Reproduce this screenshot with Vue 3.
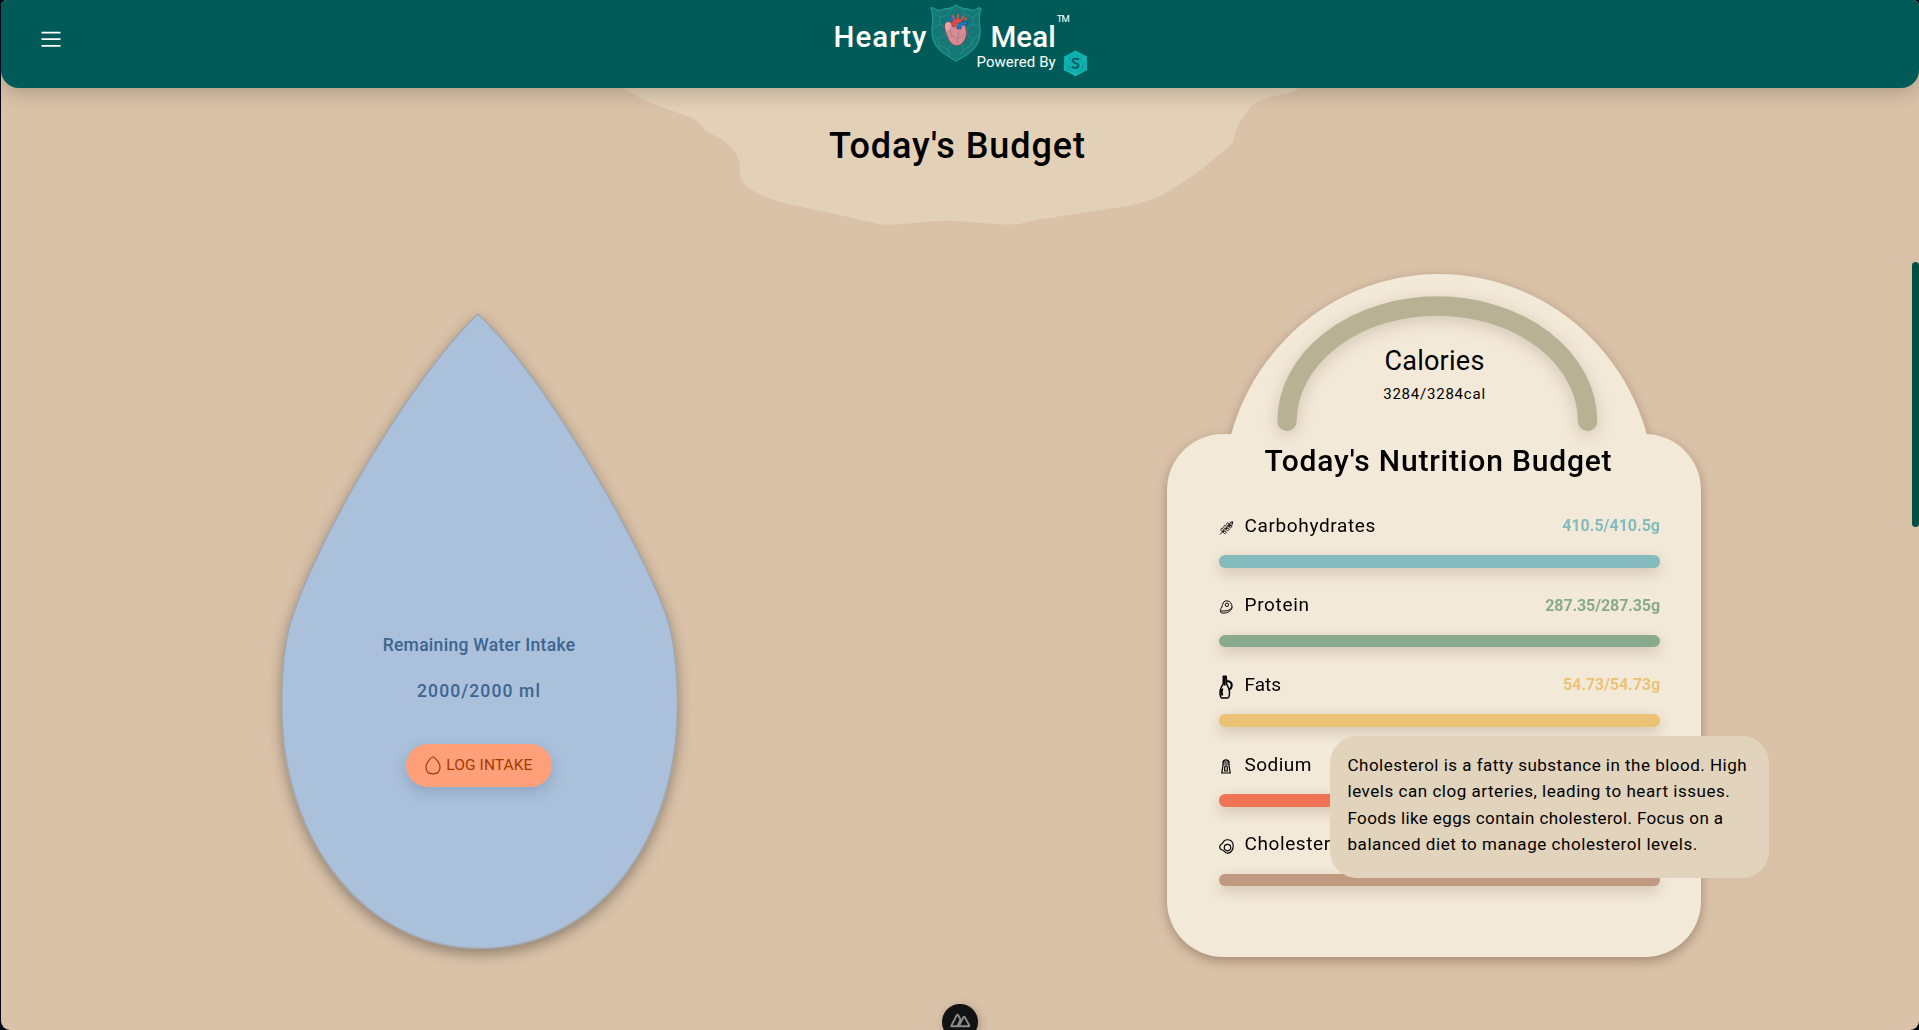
<script setup>
const nutrients = [
  { id: 'carb', name: 'Carbohydrates', ls: 0.63, amount: '410.5/410.5g', als: 0, color: '#85bbbf' },
  { id: 'protein', name: 'Protein', ls: 0.68, amount: '287.35/287.35g', als: -0.1, color: '#88aa8e' },
  { id: 'fat', name: 'Fats', ls: 0, amount: '54.73/54.73g', als: -0.06, color: '#ecc374' },
  { id: 'salt', name: 'Sodium', ls: 0.45, amount: '', als: 0, color: '#ee7455' },
  { id: 'egg', name: 'Cholesterol', ls: 0.6, amount: '', als: 0, color: '#c09a80' }
]

const tip = [
  { text: 'Cholesterol is a fatty substance in the blood. High', ls: 0.49 },
  { text: 'levels can clog arteries, leading to heart issues.', ls: 0.53 },
  { text: 'Foods like eggs contain cholesterol. Focus on a', ls: 0.38 },
  { text: 'balanced diet to manage cholesterol levels.', ls: 0.56 }
]
</script>

<template>
  <div class="page">
    <header class="bar">
      <svg class="menu" width="20" height="17" viewBox="0 0 20 17">
        <path d="M.5 1.6H19.5M.5 8.2H19.5M.5 14.8H19.5" stroke="#fff" stroke-width="1.7" />
      </svg>
      <div class="logo">
        <span class="word hearty">Hearty</span>
        <svg class="shield" width="52" height="58" viewBox="0 0 52 58">
          <defs>
            <clipPath id="shieldClip">
              <path d="M1 5Q8 10 14 5Q22 5 26 1Q31 5 38 5Q44 10 51 5Q49 15 50 26C51 42 40 50 26 57C12 50 1 42 2 26Q3 15 1 5Z" />
            </clipPath>
          </defs>
          <path d="M1 4Q3 3 5 5Q9 8 14 5Q22 5 26 1Q31 5 38 5Q43 8 47 5Q49 3 51 5Q48 13 50 25C51 42 41 49 26 57C12 49 1 42 2 25Q4 13 1 4Z" fill="#167777" stroke="#1d9791" stroke-width="1.3" />
          <g clip-path="url(#shieldClip)" fill="none" stroke="#239089" stroke-width=".9">
            <path d="M4 9L10 13L18 11L21 5M10 13V20L3 24M10 20L16 24L15 31L8 35L2 31M8 35L10 42L5 46M10 42L18 45L22 40L15 31M18 45L19 52M22 40H30L34 45L30 51M34 45L41 42L43 35L37 31L30 40M43 35L50 31M37 31L37 24L43 20L49 24M43 20V13L35 10L31 5M43 13L49 9" />
          </g>
          <path d="M15 25C13 20 17 17 22 19C27 16 36 18 36 25C38 34 33 41 27 42C20 41 17 34 15 25Z" fill="#d98b93" stroke="#7a3b50" stroke-width=".8" />
          <path d="M15 22C15 18 18 17 21 19L20 25L16 28Z" fill="#e9a4a7" />
          <path d="M19 12L24 14L23 19L20 17Z" fill="#1d6fb4" />
          <path d="M22 22C21 15 25 14 28 14.500C32 15 33 17 32 20L28 20Q27 17 25 23Z" fill="#dc4a45" stroke="#8a3038" stroke-width=".6" />
          <path d="M24 15L22.500 11M28 15V10M31 16L34 11.500M34 16L37 14" stroke="#d95550" stroke-width="1.700" />
          <path d="M27 25C26 19 31 17 38 18L37 21C33 20 31 22 31 25Z" fill="#1979bd" stroke="#17466f" stroke-width=".5" />
          <path d="M20 25L22 32L28 35L34 30M28 35L27 41M22 32L18 34M28 35L29 27" fill="none" stroke="#9c8087" stroke-width=".8" />
        </svg>
        <span class="word meal">Meal</span>
        <span class="tm">TM</span>
        <div class="powered">
          <span>Powered By</span>
          <svg width="25" height="27" viewBox="0 0 25 27">
            <path d="M12.500 .5L24 6.500V20L12.500 26.500L1 20V6.500Z" fill="#08adac" />
            <path d="M12.500 1L4 8L1 20L12.500 24.500L24 20L21 8ZM4 8H21M4 8L12.500 26L21 8M1 6.500L4 8M24 6.500L21 8M12.500 1V26M1 20L21 8M24 20L4 8" fill="none" stroke="#35bfbc" stroke-width=".4" />
            <path d="M16 9.500C14.500 8.300 10 8 9.500 10.700C9.200 13.400 15.900 12.700 15.500 15.800C15.100 18.500 10.500 18.200 8.700 16.800" fill="none" stroke="#075c60" stroke-width="1.900" />
            <path d="M6 9h1M18 9h1M5 17h1M19 17h1" stroke="#075c60" />
          </svg>
        </div>
      </div>
    </header>

    <section class="heading">
      <svg class="blob" width="676" height="137" viewBox="623 88 676 137">
        <path d="M623 88C630 92 637 96 646 101C660 107 674 111 687 116C697 120 701 124 706 131C714 135 721 138 726 143C733 149 737 153 739 162C741 169 739 177 742 180C744 184 746 187 749 188C768 201 790 204 811 209L875 223C881 225 888 225 894 224.500C910 224 925 220.700 947 220.700C970 220.700 988 224.500 1011 224.500C1022 224.500 1026 222 1036 220L1128 206C1145 202 1158 198 1169 191C1186 180 1202 170 1215 158C1223 152 1230 147 1234 140C1235 128 1241 119 1247 112C1252 104 1257 102 1261 100C1273 95 1297 94 1298 88Z" fill="#e2d0b7" />
      </svg>
      <h1>Today's Budget</h1>
    </section>

    <main class="content">
      <section class="water">
        <svg class="drop" width="397" height="635" viewBox="281 313.500 397 635">
          <path d="M478 313.500C412 376 315 540 290 624C284 645 281.700 675 281.700 706C281.700 840 365 948 480 948C597 948 677.500 840 677.500 706C677.500 675 675 638 665 611C636 535 545 377 478 313.500Z" fill="#aac0db" stroke="#a3a8ae" stroke-width="1.600" />
        </svg>
        <p class="remaining">Remaining Water Intake</p>
        <p class="ml">2000/2000 ml</p>
        <button class="log">
          <svg width="16" height="19" viewBox="0 0 16 19">
            <path d="M8 1C6.500 1 1 6.500 1 11C1 15.300 3.800 17.800 8 17.800S15 15.300 15 11C15 6.500 9.500 1 8 1Z" fill="none" stroke="#a43a00" stroke-width="1.200" />
          </svg>
          <span>LOG INTAKE</span>
        </button>
      </section>

      <section class="nutrition">
        <div class="stack">
          <svg class="dome" width="534" height="160" viewBox="1167 274 534 160">
            <ellipse cx="1439" cy="494" rx="216" ry="220" fill="#f3e9d8" />
          </svg>
          <div class="card">
            <h2>Today's Nutrition Budget</h2>
            <div v-for="n in nutrients" :key="n.id" class="row">
              <div class="head">
                <svg v-if="n.id === 'carb'" class="ico" width="14" height="14" viewBox="0 0 14 14">
                  <path d="M.5 13.500L13 1M13.300 .7L12.500 4.200L9.800 5C9 3 10 1 13.300 .7ZM9.800 5C7 5.500 6.200 3 8.200 1.600C9.800 2.300 10 3.500 9.800 5ZM9.300 5C9.500 7.400 11.300 7.600 12.400 5.700C11.700 4.400 10.600 4.600 9.300 5ZM6.800 7.500C4 8 3.400 5.400 5.200 4.200C6.800 4.800 7 6 6.800 7.500ZM6.500 7.700C6.700 10 8.600 10.200 9.700 8.500C9 7 7.800 7.200 6.500 7.700ZM3.800 10.300C1 10.800 .5 8.200 2.400 7C3.800 7.500 4 8.800 3.800 10.300ZM3.600 10.500C3.800 12.900 5.700 13 6.800 11.300C6.100 9.800 5 10 3.600 10.500Z" fill="none" stroke="#000" stroke-width=".850" />
                </svg>
                <svg v-else-if="n.id === 'protein'" class="ico" width="14" height="14" viewBox="0 0 14 14" fill="none" stroke="#000" stroke-width="1">
                  <path d="M1.300 8.700C3.300 7.600 2.300 .8 7 .8C10.700 .8 12.500 4 12.500 6.700C12.500 9.500 7.500 11.300 2.300 11C.8 10.800 .2 9.600 1.300 8.700ZM1.100 10.500V12Q1.500 13.200 3.500 13.200C8.500 13 12.500 10.500 12.500 7.200" />
                  <circle cx="7.400" cy="4.800" r="1.700" />
                </svg>
                <svg v-else-if="n.id === 'fat'" class="ico tall" width="14" height="24" viewBox="0 0 14 24" fill="none" stroke="#000">
                  <path d="M4 1H7.500V3.500H4Z" fill="#000" />
                  <path d="M4.300 3.500V8C4.300 10 1 12.500 1 17C1 20 1.700 23 3 23H8.500C9.800 23 10.500 20 10.500 17C10.500 12.500 7.500 10.500 7.500 8V3.500" stroke-width="1.500" />
                  <path d="M5.600 4V10.500M7.300 6.500C11 5.500 13 8 12.700 10.500C12.500 13 11.500 14 10 14.500" stroke-width="2.100" />
                  <path d="M3.500 13.500C2.600 15.500 2.500 18.500 3.500 20.500" stroke-width="1.800" />
                </svg>
                <svg v-else-if="n.id === 'salt'" class="ico" width="14" height="15" viewBox="0 0 14 15" fill="none" stroke="#000" stroke-width="1.200">
                  <path d="M3.500 5V3Q4 .8 6.500 .8T9.500 3V5ZM3.700 5L2.300 14H10.700L9.300 5M3.500 3H9.500M5.200 12V8.300Q5.200 6.800 6.500 6.800T7.800 8.300V12Z" />
                </svg>
                <svg v-else class="ico" width="15" height="15" viewBox="0 0 15 15" fill="none" stroke="#000" stroke-width="1.150">
                  <path d="M4.200 3.200C5 1.500 7 .6 9 .8C12 1.100 14 3.500 14.200 6.500C14.400 10.500 12 14.100 8.600 14.100C5.600 14.100 5.500 11.500 3.500 11C1.500 10.700 .6 9.500 .7 7.600C.8 5.500 3.200 5.300 4.200 3.200Z" />
                  <circle cx="8.500" cy="8.600" r="3.200" />
                </svg>
                <span class="name" :style="{ letterSpacing: n.ls + 'px' }">{{ n.name }}</span>
                <span class="amount" :style="{ color: n.color, letterSpacing: n.als + 'px' }">{{ n.amount }}</span>
              </div>
              <div class="meter" :style="{ background: n.color }"></div>
            </div>
          </div>
        </div>

        <div class="gauge">
          <svg class="arc" width="534" height="170" viewBox="1167 274 534 170">
            <path d="M1287 421.500A150.300 115.500 0 0 1 1587.600 421.500" fill="none" stroke="#b8b294" stroke-width="19.300" stroke-linecap="round" />
          </svg>
          <h3>Calories</h3>
          <p>3284/3284cal</p>
        </div>

        <div class="tooltip">
          <span v-for="t in tip" :key="t.text" :style="{ letterSpacing: t.ls + 'px' }">{{ t.text }}</span>
        </div>
      </section>
    </main>

    <div class="scroll"></div>
    <div class="badge">
      <svg width="21" height="15" viewBox="0 0 21 15">
        <path d="M8.500 13.300H1.800Q1 13.300 1.500 12.300L6.800 2.200Q7.500 1 8.200 2.200L10.500 6.500L8.300 11.500Q7.500 13.300 8.800 13.300H18.500Q19.800 13.300 19.200 12.200L14.900 4.400Q14.100 3.200 13.400 4.400L9.300 12" fill="none" stroke="#8c8c8c" stroke-width="1.900" stroke-linejoin="round" />
      </svg>
    </div>
  </div>
</template>

<style>
body { background: #010815; overflow: hidden; }
</style>

<style scoped>
* { box-sizing: border-box; margin: 0; padding: 0; }
.page {
  position: relative;
  height: 1030px;
  margin-left: 1px;
  overflow: hidden;
  background: #dac2a8;
  border-radius: 6px 6px 9px 9px;
  font-family: Roboto, "Open Sans", sans-serif;
  color: #000;
}
svg { display: block; }
p, h1, h2, h3, span { white-space: nowrap; }
.bar {
  position: relative;
  z-index: 2;
  display: flex;
  height: 88px;
  background: #005b58;
  border-radius: 0 0 18px 18px;
  box-shadow: 0 5px 20px rgba(0, 0, 0, .2);
}
.menu { margin: 31px 0 0 39.500px; }
.logo { position: relative; display: flex; height: 88px; margin-left: 773px; color: #fff; }
.word { font-size: 29.500px; font-weight: 500; line-height: 74px; }
.hearty { width: 96.500px; letter-spacing: 1px; }
.shield { margin-top: 4px; }
.meal { margin-left: 8.500px; letter-spacing: .05px; }
.tm { margin: 11.500px 0 0 1px; font-size: 9.500px; line-height: 13px; letter-spacing: -.8px; }
.powered {
  position: absolute;
  left: 143px;
  top: 50px;
  display: flex;
  gap: 7px;
  font-size: 15px;
  line-height: 24px;
  letter-spacing: .05px;
}
.heading { position: relative; height: 186px; padding-right: 5px; text-align: center; }
.blob { position: absolute; left: 622px; top: 0; }
h1 { position: relative; font-size: 36px; font-weight: 500; line-height: 117.500px; letter-spacing: .920px; }
.content { display: flex; padding-left: 280px; }
.water {
  position: relative;
  display: flex;
  flex-direction: column;
  align-items: center;
  width: 397px;
  height: 635px;
  margin-top: 39.500px;
  padding-top: 319.500px;
  color: #3d6591;
}
.drop { position: absolute; left: 0; top: 0; overflow: visible; filter: drop-shadow(0 5px 7px rgba(0, 0, 0, .34)); }
.water p, .log { position: relative; left: -.5px; }
.water p { font-size: 17.500px; font-weight: 500; line-height: 24px; }
.remaining { letter-spacing: .29px; }
.water .ml { margin-top: 22px; letter-spacing: 1.130px; }
.log {
  display: flex;
  align-items: center;
  gap: 5.500px;
  width: 146.500px;
  height: 42.500px;
  margin-top: 41px;
  padding-left: 19px;
  border: 0;
  border-radius: 21.500px;
  background: #ffa07a;
  box-shadow: 0 5px 14px rgba(60, 90, 110, .25);
  color: #a43a00;
  font: 15.500px/22px Roboto, sans-serif;
  letter-spacing: .1px;
}
.nutrition { position: relative; width: 534px; margin-left: 489px; }
.stack { filter: drop-shadow(0 4px 6px rgba(60, 30, 10, .34)); }
.card { height: 522.500px; padding: 0 41px 0 52px; background: #f3e9d8; border-radius: 56px; }
h2 { margin-left: -2px; font-size: 30px; font-weight: 500; line-height: 54px; letter-spacing: .81px; text-align: center; }
.row { height: 79.700px; padding-top: 25px; }
.head { display: flex; align-items: center; height: 24px; }
.ico { width: 15px; margin: 5px 10.500px 0 0; overflow: visible; }
.ico.tall { width: 14px; margin: 5px 11.500px 0 0; }
.name { padding-top: 1px; font-size: 19px; line-height: 24px; }
.amount { margin-left: auto; padding-top: 2px; font-size: 16px; font-weight: 700; line-height: 24px; }
.meter { height: 12.500px; margin-top: 18px; border-radius: 6.250px; box-shadow: 0 5px 14px rgba(60, 40, 20, .2); }
.gauge { position: absolute; left: 0; top: 0; width: 534px; padding: 71.500px 0 0 1px; text-align: center; }
.arc { position: absolute; left: 0; top: 0; overflow: visible; filter: drop-shadow(0 4px 8px rgba(60, 40, 20, .18)); }
h3 { position: relative; font-size: 27px; font-weight: 400; line-height: 30px; letter-spacing: .25px; }
.gauge p { position: relative; margin-top: 9.500px; font-size: 15px; line-height: 18px; letter-spacing: .780px; }
.tooltip {
  position: absolute;
  left: 163px;
  top: 462px;
  display: flex;
  flex-direction: column;
  width: 439px;
  height: 141.500px;
  padding: 16px 17.500px;
  border-radius: 27px;
  background: #e2d3bc;
  font-size: 17px;
  line-height: 26.400px;
}
.scroll { position: absolute; right: 0; top: 262px; width: 7px; height: 265px; border-radius: 4px; background: #004f40; }
.badge {
  position: absolute;
  left: 941px;
  top: 1004px;
  display: flex;
  justify-content: center;
  width: 36px;
  height: 36px;
  padding-top: 9px;
  border-radius: 18px;
  background: #121212;
  box-shadow: 2px 2px 9px rgba(0, 0, 0, .25);
}
</style>
